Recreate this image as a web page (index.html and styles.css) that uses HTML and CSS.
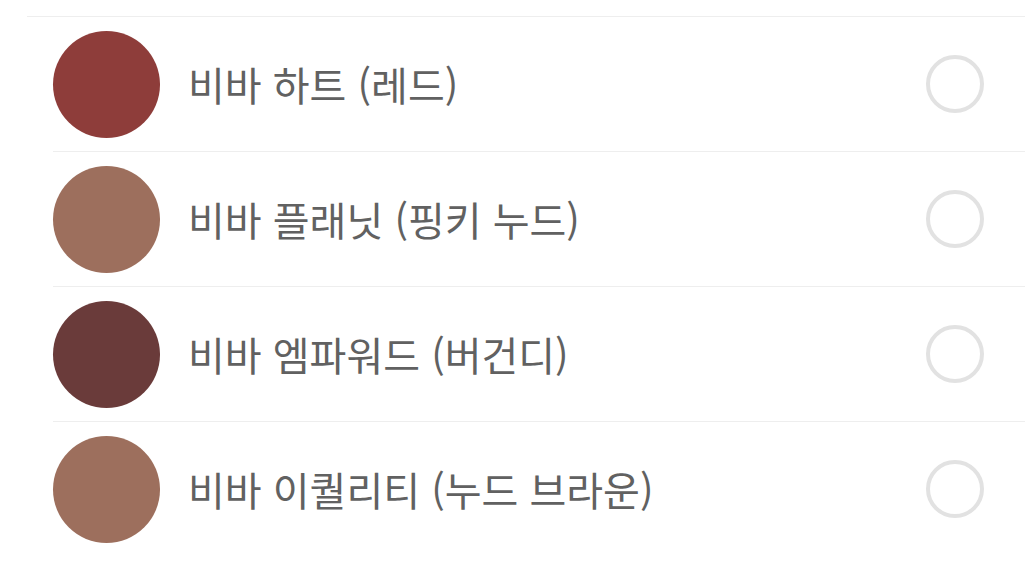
FILE: index.html
```html
<!DOCTYPE html>
<html lang="ko">
<head>
<meta charset="utf-8">
<link rel="stylesheet" href="styles.css">
</head>
<body>
<ul class="list">
  <li class="row">
    <span class="swatch swatch-red"></span>
    <span class="label">비바 하트 (레드)</span>
    <span class="radio"></span>
  </li>
  <li class="row">
    <span class="swatch swatch-nude"></span>
    <span class="label">비바 플래닛 (핑키 누드)</span>
    <span class="radio"></span>
  </li>
  <li class="row">
    <span class="swatch swatch-burgundy"></span>
    <span class="label">비바 엠파워드 (버건디)</span>
    <span class="radio"></span>
  </li>
  <li class="row">
    <span class="swatch swatch-brown"></span>
    <span class="label">비바 이퀄리티 (누드 브라운)</span>
    <span class="radio"></span>
  </li>
</ul>
</body>
</html>
```
FILE: styles.css
```css
html, body {
  margin: 0;
  padding: 0;
  background: #ffffff;
}
body {
  font-family: "Noto Sans CJK KR", "Noto Sans", sans-serif;
  width: 1025px;
  height: 588px;
  overflow: hidden;
}
.list {
  list-style: none;
  margin: 16px 0 0 27px;
  padding: 0 0 0 26px;
  border-top: 1px solid #eeeeee;
}
.row {
  display: flex;
  align-items: center;
  height: 134px;
  border-bottom: 1px solid #eeeeee;
  padding-right: 41px;
}
.row:last-child {
  border-bottom: none;
}
.swatch {
  flex: none;
  width: 107px;
  height: 107px;
  border-radius: 50%;
}
.swatch-red { background: #8e3d3a; }
.swatch-nude { background: #9d6f5d; }
.swatch-burgundy { background: #6a3b3a; }
.swatch-brown { background: #9d6f5d; }
.label {
  flex: 1;
  margin-left: 28px;
  font-size: 40px;
  font-weight: 400;
  color: #616161;
  line-height: 1;
}
.radio {
  flex: none;
  width: 50px;
  height: 50px;
  border: 4px solid #e2e2e2;
  border-radius: 50%;
}
```
